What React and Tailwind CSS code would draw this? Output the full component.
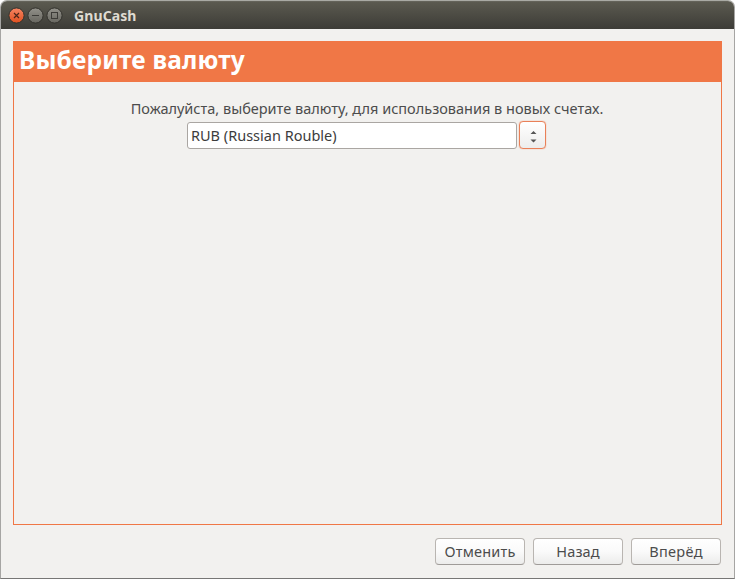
import React from 'react';

function WindowButton({ kind }) {
  const close = kind === 'close';
  return (
    <svg className="block h-[17px] w-[17px]" viewBox="0 0 17 17" fill="none">
      <defs>
        <linearGradient id={`fill-${kind}`} x1="0" y1="0" x2="0" y2="1">
          <stop offset="0" stopColor={close ? '#f58563' : '#92918a'} />
          <stop offset="1" stopColor={close ? '#e1501f' : '#67665f'} />
        </linearGradient>
      </defs>
      <circle cx="8.5" cy="8.5" r="7.6" fill={`url(#fill-${kind})`} stroke="#34332e" strokeWidth="1" />
      {kind === 'close' && <path d="M6 6l5 5M11 6l-5 5" stroke="#4b2518" strokeWidth="1.2" />}
      {kind === 'min' && <path d="M5 8.5h7" stroke="#3c3b37" />}
      {kind === 'max' && <rect x="5.5" y="5.5" width="6" height="6" stroke="#3c3b37" />}
    </svg>
  );
}

function Button({ children, spacing }) {
  return (
    <button className="flex h-[27px] w-[90px] items-center justify-center rounded-[4px] border border-[#b9b5b1] border-b-[#9f9b98] bg-linear-to-b from-white via-[#fafafa] to-[#ececeb] text-[14.5px] text-[#4c4c4c]">
      <span className={spacing}>{children}</span>
    </button>
  );
}

export default function App() {
  return (
    <div className="h-[579px] w-[735px] overflow-hidden bg-white font-['Noto_Sans','Open_Sans',sans-serif]">
      <div className="flex h-full flex-col overflow-hidden rounded-t-[7px] border border-[#a6a5a3] border-t-[#a9aaa4] border-b-[#777675] bg-[#f2f1ef]">
        <header className="flex h-[28px] shrink-0 items-center border-t border-[#64635a] bg-linear-to-b from-[#5b5a50] to-[#3d3c37] pl-[7px]">
          <div className="flex gap-[2px]">
            <WindowButton kind="close" />
            <WindowButton kind="min" />
            <WindowButton kind="max" />
          </div>
          <h1 className="ml-[11px] text-[14px] leading-[20px] font-bold tracking-[0.1px] text-[#dfdbd2]">GnuCash</h1>
        </header>
        <main className="mx-3 mt-3 flex h-[484px] shrink-0 flex-col border border-[#f07746]">
          <h2 className="flex h-10 shrink-0 items-center bg-[#f07746] pb-[4px] pl-[5px] text-[24.5px] font-bold tracking-[0.2px] whitespace-nowrap text-white">
            <span>Выберите валюту</span>
          </h2>
          <div className="flex flex-col items-center pt-4">
            <p className="mr-px h-[24px] text-[14.5px] leading-[20px] whitespace-nowrap text-[#4c4c4c]">
              Пожалуйста, выберите валюту, для использования в новых счетах.
            </p>
            <div className="-mt-px mr-[2px] flex gap-[2px]">
              <div className="mt-px flex h-[27px] w-[330px] items-center rounded-[3px] border border-[#aaa6a2] bg-white pl-[3px] text-[14.5px] text-[#3c3c3c]">
                <span>RUB (Russian Rouble)</span>
              </div>
              <button className="flex h-[28px] w-[27px] items-center justify-center rounded-[4px] border border-[#e98058] bg-linear-to-b from-white to-[#ededec] shadow-[0_0_1px_#f07746]">
                <svg className="mt-[2px] ml-px h-[13px] w-[7px]" viewBox="0 0 7 13" fill="#555">
                  <path d="M.5 4L3.5 1l3 3zM.5 9.5h6l-3 3z" />
                </svg>
              </button>
            </div>
          </div>
        </main>
        <footer className="mt-[13px] mr-[13px] flex justify-end gap-2">
          <Button spacing="tracking-[0.2px]">Отменить</Button>
          <Button spacing="tracking-[0.1px]">Назад</Button>
          <Button spacing="tracking-[0.3px]">Вперёд</Button>
        </footer>
      </div>
    </div>
  );
}
